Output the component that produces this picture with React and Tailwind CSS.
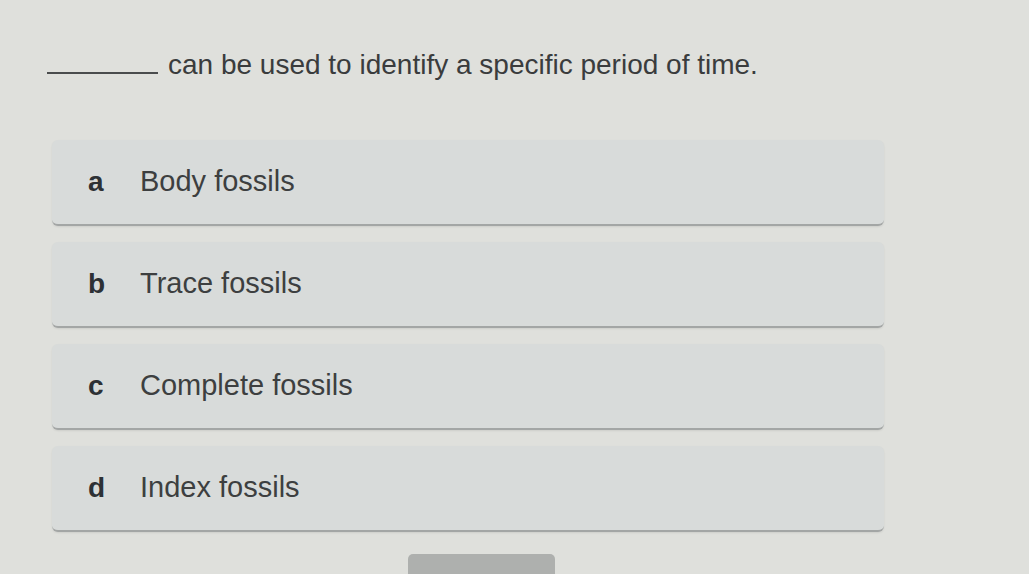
const options = [
  { key: 'a', label: 'Body fossils' },
  { key: 'b', label: 'Trace fossils' },
  { key: 'c', label: 'Complete fossils' },
  { key: 'd', label: 'Index fossils' },
];

function OptionCard({ letter, label }) {
  return (
    <div className="flex h-[86px] w-[832px] items-center rounded-md border-b-2 border-[#a3a6a5] bg-[#d8dbda] pl-[36px] shadow-[0_1px_2px_rgba(0,0,0,0.08)]">
      <span className="w-[52px] text-[28px] font-bold text-[#2d3135]">{letter}</span>
      <span className="text-[29px] text-[#3d3f40]">{label}</span>
    </div>
  );
}

export default function App() {
  return (
    <div
      className="flex h-[574px] w-[1029px] flex-col overflow-hidden bg-[#dfe0dc]"
      style={{ fontFamily: '"Liberation Sans", Arial, sans-serif' }}
    >
      <p className="pl-[47px] pt-[49px] text-[28px] leading-[32px] text-[#3a3c3d]">
        <span className="mr-[10px] inline-block w-[111px] border-b-2 border-[#4a4c4d]" />
        can be used to identify a specific period of time.
      </p>

      <div className="mt-[59px] flex flex-col gap-[16px] pl-[52px]">
        {options.map((opt) => (
          <OptionCard key={opt.key} letter={opt.key} label={opt.label} />
        ))}
      </div>

      <div className="mt-[22px] flex pl-[408px]">
        <button className="h-[30px] w-[147px] rounded-t-[5px] bg-[#aeb0ae]" />
      </div>
    </div>
  );
}
